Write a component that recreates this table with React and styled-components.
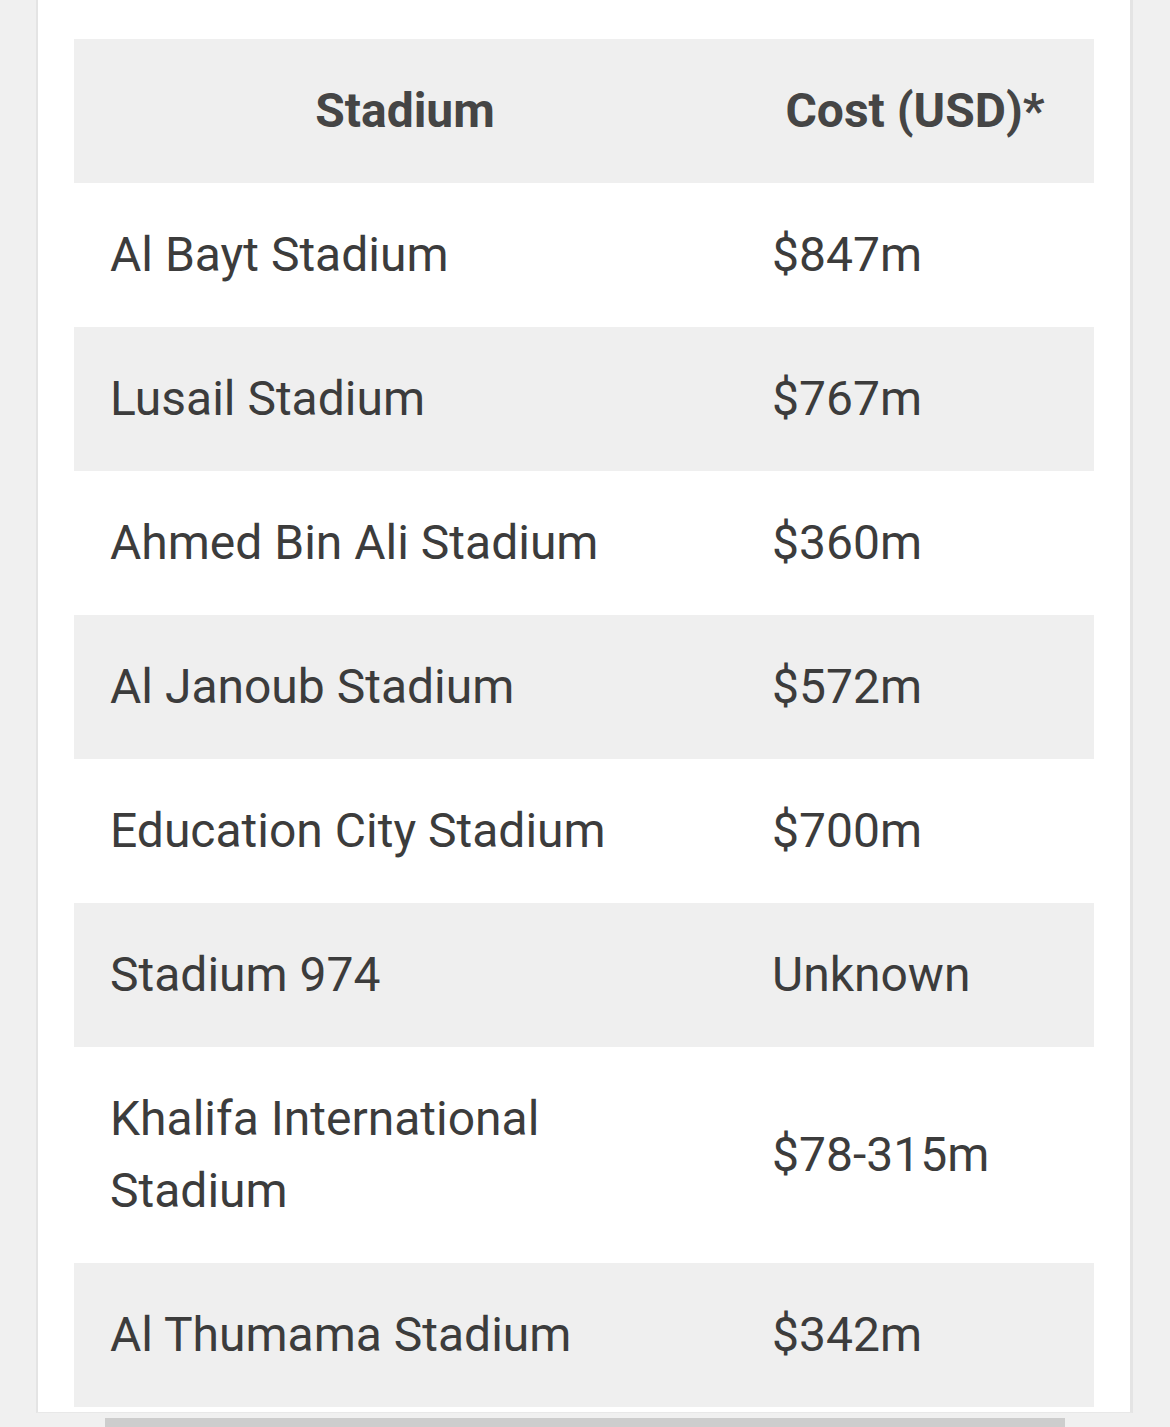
import React from "react";
import styled, { createGlobalStyle } from "styled-components";

const stadiums = [
  { name: "Al Bayt Stadium", cost: "$847m" },
  { name: "Lusail Stadium", cost: "$767m" },
  { name: "Ahmed Bin Ali Stadium", cost: "$360m" },
  { name: "Al Janoub Stadium", cost: "$572m" },
  { name: "Education City Stadium", cost: "$700m" },
  { name: "Stadium 974", cost: "Unknown" },
  { name: "Khalifa International Stadium", cost: "$78-315m" },
  { name: "Al Thumama Stadium", cost: "$342m" },
];

export default function App() {
  return (
    <>
      <GlobalStyle />
      <Page>
        <Card>
          <CostTable>
            <thead>
              <tr>
                <HeadCell $width={662}>Stadium</HeadCell>
                <HeadCell>Cost (USD)*</HeadCell>
              </tr>
            </thead>
            <tbody>
              {stadiums.map((s, i) => (
                <Row key={s.name} $shaded={i % 2 === 1}>
                  <Cell>{s.name}</Cell>
                  <Cell>{s.cost}</Cell>
                </Row>
              ))}
            </tbody>
          </CostTable>
        </Card>
        <ScrollBar />
      </Page>
    </>
  );
}

const GlobalStyle = createGlobalStyle`
  html, body {
    margin: 0;
    padding: 0;
    background: #f0f0f0;
  }
  body {
    font-family: Roboto, "Liberation Sans", sans-serif;
    overflow: hidden;
  }
`;

const Page = styled.div`
  width: 1170px;
  height: 1427px;
  overflow: hidden;
  background: #f0f0f0;
`;

const Card = styled.div`
  margin-left: 36px;
  width: 1020px;
  background: #fff;
  border-left: 2px solid #e4e4e4;
  border-right: 3px solid #e4e4e4;
  border-bottom: 1px solid #e8e8e8;
  padding: 39px 36px 5px;
`;

const CostTable = styled.table`
  width: 1020px;
  border-collapse: collapse;
  border-spacing: 0;
  table-layout: fixed;
  font-size: 48px;
  line-height: 72px;

  th,
  td {
    box-sizing: border-box;
  }
`;

const HeadCell = styled.th`
  width: ${(p) => (p.$width ? `${p.$width}px` : "auto")};
  padding: 36px;
  background: #efefef;
  color: #454545;
  font-weight: 700;
  text-align: center;
`;

const Row = styled.tr`
  background: ${(p) => (p.$shaded ? "#efefef" : "#ffffff")};
`;

const Cell = styled.td`
  padding: 36px;
  color: #3c3c3c;
  font-weight: 400;
  text-align: left;
  vertical-align: middle;
`;

const ScrollBar = styled.div`
  margin: 5px 0 0 105px;
  width: 960px;
  height: 12px;
  background: #cdcdcd;
`;
